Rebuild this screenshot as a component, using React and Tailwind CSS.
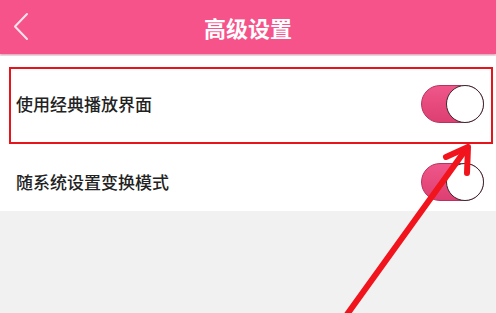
import React from "react";

function Toggle() {
  return (
    <div className="relative h-[38px] w-[63px] rounded-full border border-[#b8325f] bg-gradient-to-b from-[#f0568a] to-[#dd3f72]">
      <div className="absolute right-[-1px] top-[-1px] h-[38px] w-[38px] rounded-full border-[1.5px] border-[#3a2a30] bg-white" />
    </div>
  );
}

export default function App() {
  return (
    <div
      className="relative h-[313px] w-[496px] overflow-hidden bg-[#f1f1f1]"
      style={{ fontFamily: '"Noto Sans CJK SC", "Noto Sans", sans-serif' }}
    >
      {/* header */}
      <div className="flex h-[54px] items-center bg-[#f6538a] shadow-[0_1px_2px_rgba(200,60,100,0.5)]">
        <svg width="40" height="54" viewBox="0 0 40 54" className="shrink-0">
          <path d="M27 14 L15 26.5 L27 39" fill="none" stroke="#fde3ec" strokeWidth="2" strokeLinecap="round" strokeLinejoin="round" />
        </svg>
        <div className="flex-1 pr-[40px] text-center text-[22px] font-bold leading-none text-white">高级设置</div>
      </div>

      {/* rows */}
      <div className="mt-[2px] bg-white">
        <div className="flex h-[96px] items-center justify-between pl-[16px] pr-[12px]">
          <span className="text-[17px] font-medium text-[#222]">使用经典播放界面</span>
          <Toggle />
        </div>
        <div className="flex h-[59px] items-center justify-between pl-[16px] pr-[12px]">
          <span className="text-[17px] font-medium text-[#222]">随系统设置变换模式</span>
          <Toggle />
        </div>
      </div>

      {/* annotation box */}
      <div className="pointer-events-none absolute left-[9px] top-[67px] h-[77px] w-[484px] border-2 border-[#e8141c]" />

      {/* annotation arrow */}
      <svg className="pointer-events-none absolute left-0 top-0" width="496" height="313" viewBox="0 0 496 313">
        <line x1="343" y1="320" x2="464" y2="152" stroke="#f2141c" strokeWidth="6" strokeLinecap="round" />
        <path d="M468 147 L446 157 M468 147 L467 173" stroke="#f2141c" strokeWidth="6" strokeLinecap="round" fill="none" />
      </svg>
    </div>
  );
}
